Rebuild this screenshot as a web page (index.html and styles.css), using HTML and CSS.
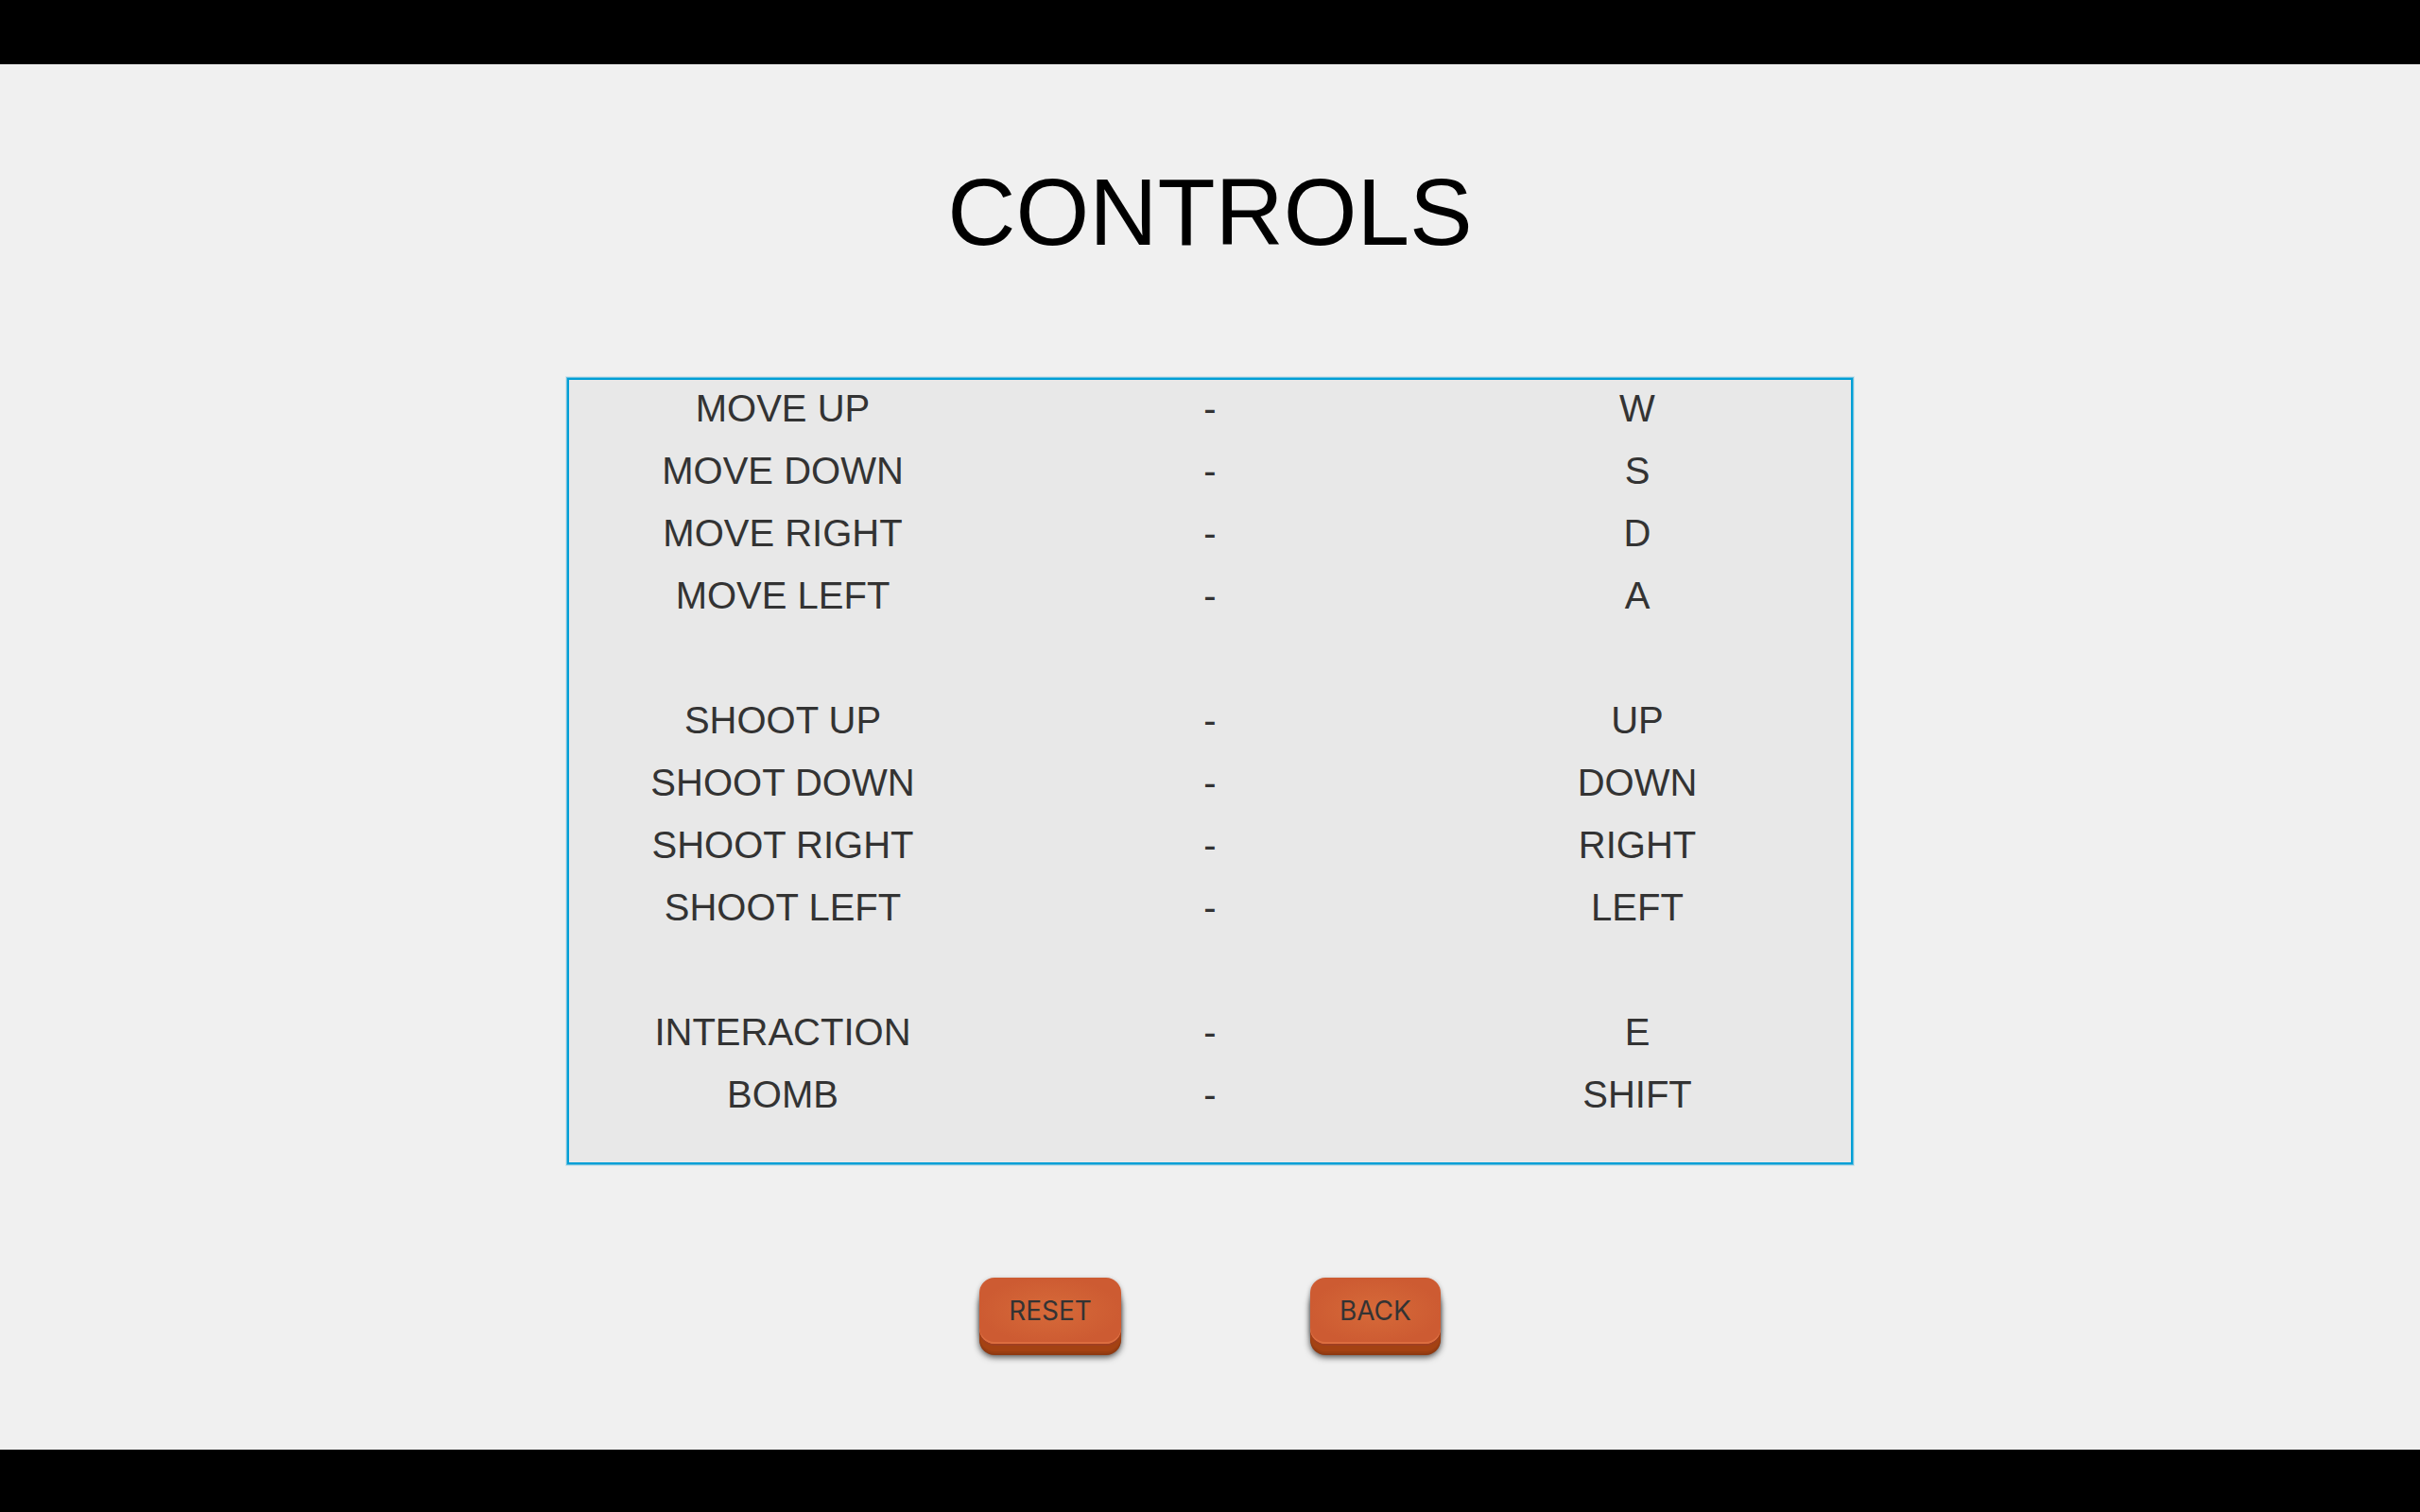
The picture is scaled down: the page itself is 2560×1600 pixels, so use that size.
FILE: index.html
```html
<!DOCTYPE html>
<html lang="en">
<head>
<meta charset="utf-8">
<title>Controls</title>
<link rel="stylesheet" href="styles.css">
</head>
<body>
<main class="screen">
  <h1 class="title">CONTROLS</h1>
  <div class="panel">
    <table class="bindings">
      <tbody>
        <tr><th scope="row">MOVE UP</th><td>-</td><td>W</td></tr>
        <tr><th scope="row">MOVE DOWN</th><td>-</td><td>S</td></tr>
        <tr><th scope="row">MOVE RIGHT</th><td>-</td><td>D</td></tr>
        <tr><th scope="row">MOVE LEFT</th><td>-</td><td>A</td></tr>
      </tbody>
      <tbody>
        <tr class="spacer"><td colspan="3"></td></tr>
        <tr><th scope="row">SHOOT UP</th><td>-</td><td>UP</td></tr>
        <tr><th scope="row">SHOOT DOWN</th><td>-</td><td>DOWN</td></tr>
        <tr><th scope="row">SHOOT RIGHT</th><td>-</td><td>RIGHT</td></tr>
        <tr><th scope="row">SHOOT LEFT</th><td>-</td><td>LEFT</td></tr>
      </tbody>
      <tbody>
        <tr class="spacer"><td colspan="3"></td></tr>
        <tr><th scope="row">INTERACTION</th><td>-</td><td>E</td></tr>
        <tr><th scope="row">BOMB</th><td>-</td><td>SHIFT</td></tr>
      </tbody>
    </table>
  </div>
  <div class="actions">
    <button class="button" type="button">RESET</button>
    <button class="button" type="button">BACK</button>
  </div>
</main>
</body>
</html>
```

FILE: styles.css
```css
* {
  box-sizing: border-box;
}

body {
  margin: 0;
  min-height: 100vh;
  padding: 68px 0 66px;
  display: flex;
  flex-direction: column;
  background: #000;
  font-family: "Liberation Sans", Arial, sans-serif;
}

.screen {
  flex: 1;
  display: flex;
  flex-direction: column;
  align-items: center;
  padding: 98px 24px;
  background: #f0f0f0;
}

.title {
  margin: 0 0 118px;
  font-size: 100px;
  line-height: 116px;
  font-weight: 400;
  color: #000;
}

.panel {
  width: 100%;
  max-width: 1360px;
  padding-bottom: 36px;
  border: 2px solid #009fd6;
  box-shadow: 0 0 0 1px #67bfe0, 0 0 0 2px #d3e4ea;
  background: #e8e8e8;
}

.bindings {
  width: 100%;
  table-layout: fixed;
  border-collapse: collapse;
  font-size: 40px;
  line-height: 60px;
  color: #333;
}

.bindings th,
.bindings td {
  padding: 0 0 6px;
  font-weight: 400;
  text-align: center;
}

.spacer td {
  height: 66px;
}

.actions {
  display: flex;
  gap: 200px;
  margin-top: 120px;
}

/* The stacked shadows form the thick lower edge of the key. */
.button {
  height: 70px;
  margin: 0 0 12px;
  padding: 0 31px;
  border: 0;
  border-radius: 16px;
  background: radial-gradient(ellipse closest-side, #d66a39, #cd5b32);
  box-shadow:
    inset 0 -2px 0 #dc6d3f,
    0 2px 0 #a03f20,
    0 8px 0 #a44213,
    0 10px 0 #9a3e12,
    0 12px 0 #8f3a12,
    0 2px 5px rgba(0, 0, 0, 0.4),
    0 14px 7px rgba(0, 0, 0, 0.7);
  font-family: Inter, Roboto, sans-serif;
  font-size: 28px;
  line-height: 70px;
  color: #333;
}
```
